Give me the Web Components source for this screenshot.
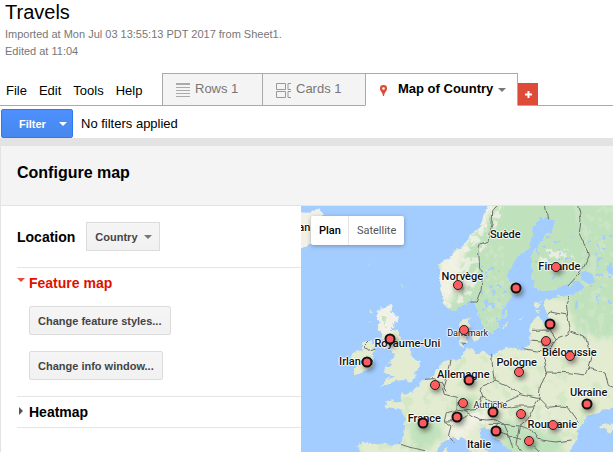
<!DOCTYPE html>
<html lang="en">
<head>
<meta charset="utf-8">
<title>Travels</title>
<style>
  html, body { margin: 0; min-height: 100%; background: #fff; }
  body { font: 13px/16px "Liberation Sans", Arial, sans-serif; color: #000; overflow-x: hidden; }
</style>
</head>
<body>
<travels-app></travels-app>

<template id="t-app">
  <style>
    :host { display: block; }
    .bar { display: flex; align-items: center; gap: 8px; padding: 3px 0 0 1px; height: 29px; }
    .body { border-left: 1px solid #e3e3e3; }
    h2 { margin: 0; padding: 0 16px 6px; background: #f4f4f4; border-bottom: 1px solid #e3e3e3; font-size: 16px; line-height: 53px; }
    .band { height: 8px; background: #e3e3e3; }
    .split { display: grid; grid-template-columns: 300px 1fr; align-items: start; }
  </style>
  <doc-header></doc-header>
  <tab-strip></tab-strip>
  <div class="bar"><filter-button></filter-button><span>No filters applied</span></div>
  <div class="band"></div>
  <div class="body">
    <h2>Configure map</h2>
    <div class="split"><config-panel></config-panel><map-view></map-view></div>
  </div>
</template>

<template id="t-header">
  <style>
    :host { display: block; padding: 0 5px; }
    h1 { margin: 0 0 2px; font-size: 20px; line-height: 24px; font-weight: normal; }
    p { margin: 0; font-size: 11px; line-height: 17px; color: #777; }
  </style>
  <h1>Travels</h1>
  <p>Imported at Mon Jul 03 13:55:13 PDT 2017 from Sheet1.</p>
  <p>Edited at 11:04</p>
</template>

<template id="t-tabs">
  <style>
    :host { display: flex; margin-top: 13px; height: 33px; box-sizing: border-box; box-shadow: inset 0 -1px #aaa; }
    button { font: inherit; border: 0; margin: 0; padding: 0; background: none; color: inherit; }
    nav { display: flex; gap: 12px; width: 156px; padding: 10px 0 0 6px; align-items: flex-start; }
    .plus { align-self: flex-end; width: 20px; height: 22px; background: #dd4b39; display: grid; place-items: center; margin-bottom: 1px; }
    svg { display: block; }
  </style>
  <nav aria-label="Menu"><button>File</button><button>Edit</button><button>Tools</button><button>Help</button></nav>
  <view-tab style="width:100px">
    <svg slot="icon" width="14" height="14" viewBox="0 0 14 14"><path fill="#aaa" d="M0 0h14v2H0zM0 4h14v1H0zM0 7h14v1H0zM0 10h14v1H0zM0 13h14v1H0z"/></svg>Rows 1</view-tab>
  <view-tab style="width:103px">
    <svg slot="icon" width="15" height="15" viewBox="0 0 15 15" fill="none" stroke="#999"><path d="M.5.5h9v6h-9zM.5 8.500h9v6h-9zM15 .5h-3v6h3M15 8.500h-3v6h3"/></svg>Cards 1</view-tab>
  <view-tab active style="width:153px">
    <svg slot="icon" width="7" height="11" viewBox="0 0 7 11"><path fill="#dd4b39" fill-rule="evenodd" d="M3.500 0A3.400 3.400 0 0 0 0 3.500C0 6 2.500 7 3 11h1c.5-4 3-5 3-7.500A3.400 3.400 0 0 0 3.500 0zm0 2.200a1.300 1.300 0 1 1 0 2.600 1.300 1.300 0 0 1 0-2.600z"/></svg>Map of Country</view-tab>
  <button class="plus" aria-label="Add"><svg width="7" height="7" viewBox="0 0 7 7"><path fill="#fff" d="M2.500 0h2v2.500H7v2H4.500V7h-2V4.500H0v-2h2.500z"/></svg></button>
</template>

<template id="t-tab">
  <style>
    :host { display: block; box-sizing: border-box; border: 1px solid #aaa; border-right: 0; background: #f4f4f4; color: #777; }
    :host([active]) { background: #fff; color: #000; font-weight: bold; border-right: 1px solid #aaa; border-bottom-color: #fff; }
    button { display: flex; align-items: flex-start; width: 100%; height: 100%; border: 0; background: none; font: inherit; color: inherit; padding: 7px 0 0 13px; gap: 5px; white-space: nowrap; }
    ::slotted(svg) { display: block; margin-top: 2px; flex: none; }
    :host([active]) button { gap: 11px; padding-left: 14px; }
    :host([active]) ::slotted(svg) { margin-top: 4px; }
    i { display: none; border: 4px solid transparent; border-top-color: #777; border-bottom: 0; margin: 7px 0 0 -6px; }
    :host([active]) i { display: block; }
  </style>
  <button><slot name="icon"></slot><span><slot></slot></span><i></i></button>
</template>

<template id="t-filter">
  <style>
    :host { display: block; }
    button { display: flex; align-items: center; gap: 13px; height: 29px; width: 72px; padding: 0 0 0 17px; border: 1px solid #3079ed; border-radius: 2px; background: linear-gradient(#4d90fe, #4787ed); color: #fff; font: bold 11px/16px "Liberation Sans", Arial, sans-serif; box-sizing: border-box; }
    i { border: 4px solid transparent; border-top-color: #fff; border-bottom: 0; }
  </style>
  <button>Filter<i></i></button>
</template>

<template id="t-panel">
  <style>
    :host { display: block; padding-left: 16px; }
    .row { display: flex; align-items: center; gap: 11px; height: 61px; border-bottom: 1px solid #e5e5e5; font-weight: bold; font-size: 14px; }
    .sel { position: relative; }
    select { appearance: none; height: 29px; width: 74px; padding: 0 0 0 8px; border: 1px solid #dcdcdc; border-radius: 0; background: linear-gradient(#f5f5f5, #f1f1f1); color: #444; font: bold 11px/16px "Liberation Sans", Arial, sans-serif; }
    .sel::after { content: ""; position: absolute; right: 8px; top: 13px; border: 4px solid transparent; border-top-color: #777; border-bottom: 0; pointer-events: none; }
  </style>
  <div class="row"><label for="loc">Location</label><span class="sel"><select id="loc"><option>Country</option></select></span></div>
  <config-section heading="Feature map" open>
    <soft-button>Change feature styles...</soft-button>
    <soft-button>Change info window...</soft-button>
  </config-section>
  <config-section heading="Heatmap"></config-section>
</template>

<template id="t-section">
  <style>
    :host { display: block; border-bottom: 1px solid #e5e5e5; }
    button { display: flex; align-items: center; width: 100%; height: 30px; padding: 0; border: 0; background: none; font: bold 14px/16px "Liberation Sans", Arial, sans-serif; color: #000; }
    i { width: 12px; height: 10px; flex: none; }
    i::before { content: ""; display: block; width: 0; border: 4px solid transparent; border-left-color: #555; border-right: 0; margin-left: 2px; }
    :host([open]) button { color: #dd1100; }
    :host([open]) i::before { border: 4px solid transparent; border-top-color: #dd4b39; border-bottom: 0; margin-left: 0; }
    .content { display: none; flex-direction: column; align-items: flex-start; gap: 16px; padding: 8px 0 16px 12px; }
    :host([open]) .content { display: flex; }
  </style>
  <button><i></i><span id="h"></span></button>
  <div class="content"><slot></slot></div>
</template>

<template id="t-soft">
  <style>
    :host { display: block; }
    button { height: 29px; padding: 0 8px; border: 1px solid #dcdcdc; border-radius: 2px; background: linear-gradient(#f5f5f5, #f1f1f1); color: #444; font: bold 11px/16px "Liberation Sans", Arial, sans-serif; }
  </style>
  <button><slot></slot></button>
</template>

<template id="t-map">
  <style>
    :host { display: block; position: relative; overflow: hidden; aspect-ratio: 156 / 123; background: #a3ccff; }
    .art { display: block; width: 100%; height: 100%; }
    filter { color-interpolation-filters: sRGB; }
    .types { position: absolute; left: 10px; top: 10px; display: flex; height: 29px; background: #fff; border-radius: 2px; box-shadow: 0 1px 4px rgba(0,0,0,.3); }
    .types button { border: 0; background: none; padding: 0 8px; font: 11px/16px Roboto, sans-serif; color: #565656; }
    .types button:first-child { color: #000; font-weight: 500; padding-right: 7px; border-right: 1px solid #e5e5e5; }
  </style>
  <svg class="art" viewBox="0 0 936 738" preserveAspectRatio="xMinYMin slice" aria-hidden="true">
    <defs>
      <filter id="rough" x="-5%" y="-5%" width="110%" height="110%"><feTurbulence type="fractalNoise" baseFrequency=".05" numOctaves="3" seed="4" result="n"/><feDisplacementMap in="SourceGraphic" in2="n" scale="22" xChannelSelector="R" yChannelSelector="G"/></filter>
      <filter id="wobble"><feTurbulence type="fractalNoise" baseFrequency=".04" numOctaves="1" seed="8" result="n"/><feDisplacementMap in="SourceGraphic" in2="n" scale="16" xChannelSelector="R" yChannelSelector="G"/></filter>
      <filter id="soft" x="-20%" y="-20%" width="140%" height="140%"><feGaussianBlur stdDeviation="10"/></filter>
      <filter id="relief" x="0" y="0" width="100%" height="100%"><feTurbulence type="fractalNoise" baseFrequency=".045" numOctaves="4" seed="12"/><feColorMatrix values="0 0 0 0 .95  0 0 0 0 .95  0 0 0 0 .91  8 0 0 0 -3.900" result="p"/><feComposite in="p" in2="SourceGraphic" operator="in"/></filter>
      <filter id="woods" x="0" y="0" width="100%" height="100%"><feTurbulence type="fractalNoise" baseFrequency=".03" numOctaves="4" seed="31"/><feColorMatrix values="0 0 0 0 .78  0 0 0 0 .89  0 0 0 0 .73  7 0 0 0 -3.900" result="p"/><feComposite in="p" in2="SourceGraphic" operator="in"/></filter>
      <filter id="lakes" x="0" y="0" width="100%" height="100%"><feTurbulence type="fractalNoise" baseFrequency=".06" numOctaves="3" seed="3"/><feColorMatrix values="0 0 0 0 .64  0 0 0 0 .8  0 0 0 0 1  14 0 0 0 -9.200" result="p"/><feComposite in="p" in2="SourceGraphic" operator="in"/></filter>
      <path id="land" d="M568-20 548 25 540 60 515 80 494 113 465 132 443 158 416 176 414 213 421 245 425 292 450 316 470 306 497 294 514 280 525 300 534 328 545 355 552 378 575 380 590 364 594 342 617 334 614 300 624 282 632 268 660 262 663 247 625 232 621 194 645 158 680 130 692 104 690 76 707 44 738 30 763 48 752 76 729 94 702 134 690 160 690 205 701 242 723 254 762 248 802 236 838 225 850 242 828 262 796 272 765 274 737 280 728 302 740 324 745 345 726 352 712 329 697 344 688 372 688 400 678 422 650 432 630 419 600 432 574 447 545 440 517 437 501 430 488 440 484 455 468 460 440 462 418 476 398 506 378 520 357 532 346 553 328 558 318 566 300 559 299 584 280 586 250 588 252 602 280 606 302 616 314 646 308 690 296 714 265 716 235 711 183 710 170 724 180 760H400L420 715 455 695 482 697 497 708 514 760H572L548 710 535 682 550 664 572 668 578 692 607 717 650 760H800L804 724 830 697 829 668 850 652 863 628 893 618 916 615 960 595V-20Z"/>
      <g id="isles"><path d="M240 302 272 298 267 316 294 329 288 350 266 371 290 374 307 410 327 431 330 450 357 464 353 488 338 500 350 512 324 523 290 523 266 532 236 545 256 520 278 512 258 507 247 493 265 481 262 462 281 452 270 432 248 425 255 406 240 397 247 375 230 372 239 350 226 339Z"/><path d="M188 408 209 402 222 425 214 445 218 482 198 496 160 509 156 490 172 477 153 460 160 438 184 433Z"/><path d="M478 348 506 330 503 360 494 374 496 400 486 424 475 418 474 382 470 367ZM508 386l20-7 6 18-14 12zM-10 20 30 20 50 6 72 22 58 42 58 70 35 110 5 126-10 128ZM205 172l8 3-5 5zM303 230l4 12-3 6zM208 316l8-5-3 12zM204 336l4 12-4 2zM621 346l-8 25-5-6zM665 330l-7 17-4-4zM704 290l18-4-6 15-16 6zM706 312l12 0-7 8zM900 655l36-6v35l-20-6-18-10zM425 738l12-20 6 20z"/></g>
      <clipPath id="c"><use href="#land"/></clipPath>
    </defs>
    <g filter="url(#rough)">
      <use href="#land" fill="#e3ecd1"/><use href="#isles" fill="#e3ecd1"/>
      <g clip-path="url(#c)">
        <g filter="url(#soft)">
          <path fill="#bfe1bb" d="M380-60H1000V400L840 390 810 330 740 270 660 300 600 400 540 410 500 340 400 340ZM320 650l80-20 30 60-90 60zM590 640l100 20 100 40-20 60H620zM455 580l70-10 20 45-70 25z"/>
          <path fill="#e3ecd1" d="M720 275h80l10 80-70 40-80-20z"/>
          <path fill="#f1f1e2" d="M545-30h45l-25 65-45 50-30 50-10 50-20 70-10 30-30 20-20-110 90-100zM440 630l100-15 60 20-80 25-45 50-25-20z"/>
        </g>
      </g>
      <path fill="#f2f1e7" d="M-10 20 30 20 50 6 72 22 58 42 58 70 35 110 5 126-10 128ZM240 302 272 298 267 316 294 329 288 350 266 371 280 378 250 390 235 370 239 350 226 339Z"/>
    </g>
    <g clip-path="url(#c)">
      <path filter="url(#woods)" opacity=".5" d="M140 440H936V738H140z"/>
      <path filter="url(#relief)" opacity=".8" d="M540 0h70l-30 85-45 60-5 80-30 60-80 30V180zM450 630l110-15 40 18-90 20-45 60-25-10zM720 130h80l40 50-70 15-60-15z"/>
      <path filter="url(#relief)" opacity=".2" d="M550 120h60v240h-60zM820 0h116v400H840zM570 560l150 20 90 60-20 60-120-80-100-10zM290 720l90-15 20 33H290z"/>
      <path filter="url(#lakes)" d="M540 180h80v200h-80zM700 90h120v140H700zM860 60h76v240h-76z"/>
      <path fill="#a3ccff" d="m838 200 14-5 22 10 8 24-18 6-22-14zM916 178l20 4v24l-14-4zM548 284l12-6 4 18-8 12zM572 300l8-10 2 12-8 8zM824 286l6-4v24l-8 4z"/>
    </g>
    <g filter="url(#rough)"><path fill="#c8e4bf" d="M244 330l12 4-6 30zM165 455l18-4-4 15zM278 400l14 3 10 20-15-10z"/></g>
    <g fill="none" stroke="#6d6f6d" stroke-width="3" stroke-linejoin="round" filter="url(#wobble)">
      <path d="M592-5 575 14 573 60 564 80 562 104 539 114 533 130 536 190 545 210 540 250 526 288 508 288M733-5 740 42M830-5 840 40 835 80 865 145 848 185 798 240M806 270 796 292 800 328 748 318 740 324M800 328 808 370 798 384 765 398 748 372 690 373M765 398 750 424 736 440 662 427M688 402 725 405 736 440M808 375 850 390 860 430 872 455 864 488 850 507 800 500 740 498 732 503M736 440 730 460 738 500 718 540 714 578M864 488 912 498 922 535 940 542M572 444 575 490 580 526 622 540 660 566 714 578M580 526 535 544 545 570 575 590 610 590 660 566M578 592 610 608 645 600 700 600 714 578 740 604 780 600 800 602 835 650M700 600 680 640 655 660 610 655 580 640 560 642M560 655 610 655 625 690 660 700M655 660 645 715 665 738M655 660 690 670 710 700 760 708 812 702M700 720 718 738M590 655 580 675 622 686 635 725M450 462 445 488 437 510 425 548 430 565 466 574 465 612 436 620 430 645 450 660 442 690 460 710M370 520 400 518 420 528 435 556M465 612 490 615 515 630 540 640 560 642M430 645 475 644 500 628M490 615 530 610 545 570M296 714 330 725 375 734M208 404 190 422 205 434 220 430M476 414 492 416"/>
    </g>
  </svg>
  <div id="items"></div>
  <div class="types"><button>Plan</button><button>Satellite</button></div>
</template>

<template id="t-label">
  <style>
    :host { position: absolute; transform: translate(-50%, -50%); font: 500 11px/14px Roboto, sans-serif; color: #111; white-space: nowrap; text-shadow: 1px 0 1px #fff, -1px 0 1px #fff, 0 1px 1px #fff, 0 -1px 1px #fff, 0 0 2px #fff; }
    :host([small]) { font-size: 9px; font-weight: 400; }
  </style><slot></slot>
</template>

<template id="t-pin">
  <style>
    :host { position: absolute; width: 10px; height: 10px; box-sizing: border-box; transform: translate(-50%, -50%); border-radius: 50%; background: #ff5c5f; border: 1px solid #222; box-shadow: 2px 3px 5px rgba(0,0,0,.45); }
    :host([many]) { width: 11px; height: 11px; border: 2px solid #111; }
  </style>
</template>

<script>
  const define = (name, id, setup) => customElements.define(name, class extends HTMLElement {
    constructor() {
      super();
      this.attachShadow({ mode: 'open' }).append(document.getElementById(id).content.cloneNode(true));
    }
    connectedCallback() { if (setup) setup(this, this.shadowRoot); }
  });

  // Map items use a 936 by 738 grid and scale with the map.
  const place = el => {
    el.style.left = el.getAttribute('x') / 9.36 + '%';
    el.style.top = el.getAttribute('y') / 7.38 + '%';
  };
  const labels = [
    ['an', 10, 67], ['Suède', 613, 88], ['Norvège', 484, 214], ['Finlande', 775, 182],
    ['Danemark', 500, 381, 1], ['Royaume-Uni', 319, 414], ['Irlande', 165, 467],
    ['Allemagne', 487, 507], ['Pologne', 647, 471], ['Biélorussie', 805, 440],
    ['Ukraine', 863, 560], ['Autriche', 568, 598, 1], ['France', 370, 638],
    ['Roumanie', 754, 657], ['Italie', 534, 718]
  ];
  const pins = [
    [472, 236], [766, 184], [646, 247, 1], [490, 373], [748, 355, 1], [736, 406], [806, 449],
    [655, 499], [268, 399, 1], [197, 467, 1], [403, 538], [505, 521, 1], [487, 592],
    [469, 634, 1], [577, 617, 1], [661, 625], [859, 595, 1], [755, 656], [367, 650, 1],
    [586, 676, 1], [685, 704]
  ];

  define('map-label', 't-label', place);
  define('map-pin', 't-pin', place);
  define('map-view', 't-map', (el, root) => {
    root.getElementById('items').innerHTML =
      labels.map(([t, x, y, s]) => `<map-label x="${x}" y="${y}"${s ? ' small' : ''}>${t}</map-label>`).join('') +
      pins.map(([x, y, m]) => `<map-pin x="${x}" y="${y}"${m ? ' many' : ''}></map-pin>`).join('');
  });
  define('soft-button', 't-soft');
  define('config-section', 't-section', (el, root) => {
    root.getElementById('h').textContent = el.getAttribute('heading');
    root.querySelector('button').onclick = () => el.toggleAttribute('open');
  });
  define('config-panel', 't-panel');
  define('filter-button', 't-filter');
  define('view-tab', 't-tab');
  define('tab-strip', 't-tabs');
  define('doc-header', 't-header');
  define('travels-app', 't-app');
</script>
</body>
</html>
